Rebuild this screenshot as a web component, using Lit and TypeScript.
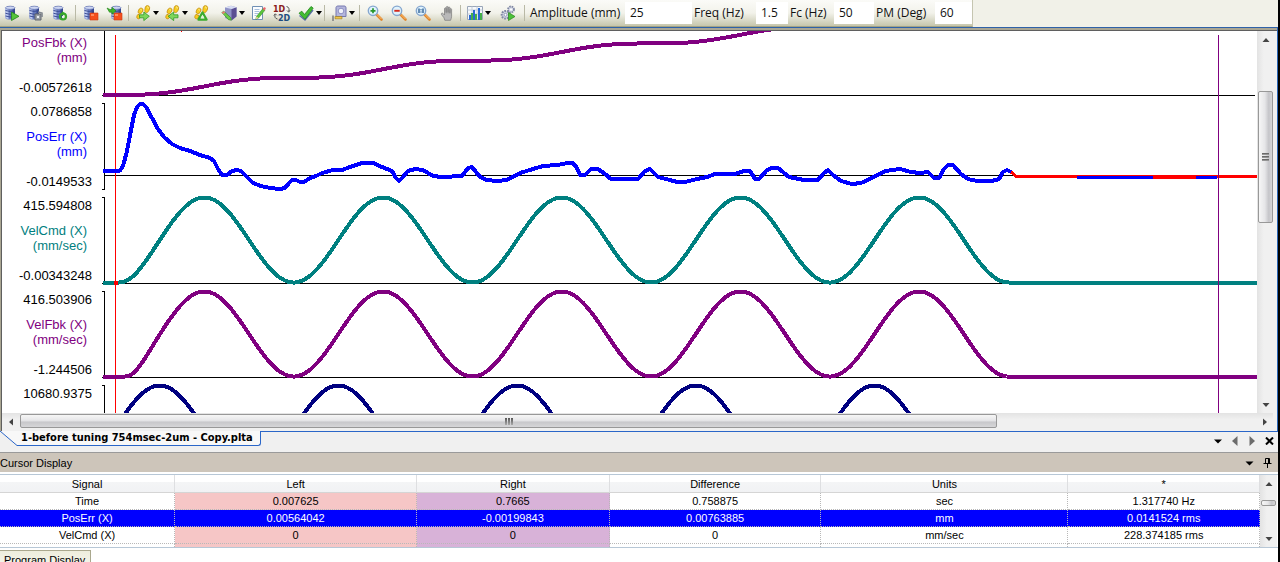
import { LitElement, html, svg, css, nothing, type TemplateResult } from "lit";
import { customElement } from "lit/decorators.js";
import { classMap } from "lit/directives/class-map.js";

/* ---------- icon parts, all on a 16 x 16 grid ---------- */

const drum = svg`
  <path d="M1.5 3v10c0 2 9.500 2 9.500 0V3z" fill="#6478bd"/>
  <path d="M1.500 3h3v11c-2-.2-3-.6-3-1z" fill="#b9c6ee"/>
  <path d="M8.500 3h2.500v10c0 .5-1 .9-2.500 1z" fill="#33458c"/>
  <path d="M1.500 5.500q4.700 2 9.500 0M1.500 8.300q4.700 2 9.500 0M1.500 11q4.700 2 9.500 0" fill="none" stroke="#3d4e96"/>
  <ellipse cx="6.250" cy="2.800" rx="4.800" ry="1.600" fill="#cdd6f2" stroke="#5a6cae" stroke-width=".7"/>`;

const stop = svg`<path d="M7 8h8v7H7z" fill="#f4501e" stroke="#c93a10" stroke-width=".6"/><path d="M8 9h3v2H8z" fill="#ff8a5c"/>`;

const steps = svg`
  <g fill="#f7cd20" stroke="#c08a08" stroke-width=".8">
    <path d="M11.500.8c2.300-.6 3.600 1 3 3.200-.5 1.800-1.500 3.600-3 3.600s-1.900-1.400-1.600-3.200c.2-1.600.5-3.200 1.600-3.600z"/>
    <path d="M5.500 3.200c2.200-.4 3 1.200 2.200 3C6.800 8.300 5.500 9 4.200 8.600 2.800 8 3 6.500 3.600 5.200c.4-1 1-1.800 1.900-2z"/>
    <path d="M3 9.300l3 1.300c-.3 1.900-1.200 3.400-2.700 3.200C1.200 13.500 1.500 11 3 9.300z"/>
  </g>
  <path d="M12 2c1-.2 1.500.5 1.300 1.500M5.600 4.500c.7-.2 1 .3.800.9" stroke="#fff3a8" fill="none"/>`;

const lens = svg`
  <path d="M9.500 9.500l5 5" stroke="#e0872c" stroke-width="2.600" stroke-linecap="round"/>
  <path d="M9.800 9.300l4.700 4.700" stroke="#ffc37a" stroke-width=".9"/>
  <circle cx="6" cy="5.800" r="4.700" fill="#dff3fd" stroke="#85a6cf" stroke-width="1.400"/>`;

const pencil = svg`
  <path d="M6.500 11.500L13 3.500l2 1.600-6.500 8-2.700 1.200z" fill="#5ac63c" stroke="#2f8a1e" stroke-width=".6"/>
  <path d="M12.500 4l1.200-1.500c1-.8 2.600.4 1.900 1.500L14.500 5.600z" fill="#e8686c"/>
  <path d="M6.500 11.500l2 1.600-2.700 1.200z" fill="#f6d9a0"/>`;

const ICONS: Record<string, TemplateResult> = {
  run: svg`${drum}<path d="M7.500 7l7.500 4.300L7.500 15.500z" fill="#56c43a" stroke="#258a18" stroke-width=".8"/>`,
  halt: svg`${drum}<path d="M7 9h6v6H7z" fill="#9aa0a8" stroke="#62676e"/><path d="M10 7l4 1v4" stroke="#80868e" fill="none" stroke-width="1.600"/><path d="M9 11h2v2H9z" fill="#eceff2"/>`,
  cycle: svg`${drum}<circle cx="11" cy="11.500" r="3" fill="none" stroke="#37a62a" stroke-width="2.200"/><path d="M10 6.300l3.600 2.200-3.600 2.200z" fill="#37a62a"/><path d="M10 11h2v2h-2z" fill="#e7f7e2"/>`,
  stop: svg`${drum}${stop}`,
  swap: svg`<g transform="translate(3 0)">${drum}</g>${stop}<path d="M0 3l3 1.500h2V2.300L9 5.800 5 9.300V7.200H2.500z" fill="#3fb62c" stroke="#1d8212" stroke-width=".6"/>`,
  stepNext: svg`${steps}<path d="M4.500 9.800h4.300V7l5.500 4.300-5.500 4.300v-2.800H4.500z" fill="#7fd75c" stroke="#2f9a24" stroke-width=".8"/>`,
  stepBack: svg`${steps}<path d="M14 9.800H9.700V7l-5.500 4.300 5.500 4.300v-2.800H14z" fill="#7fd75c" stroke="#2f9a24" stroke-width=".8"/>`,
  stepLoop: svg`${steps}<path d="M9.500 7.500l4 7H5.500z" fill="none" stroke="#3aab2c" stroke-width="2.400" stroke-linejoin="round"/><path d="M9.500 9.500l2 4h-4z" fill="#dff5d6"/>`,
  edit: svg`
    <path d="M4 2.500L10 .8 15.500 2.200v9.300l-5 4L4 13z" fill="#8f93c6"/>
    <path d="M10.500 4v11.500l5-4V2.200z" fill="#5b4f92"/>
    <path d="M4 2.500L10 .8l5.500 1.400-5 1.800z" fill="#d7dcf3"/>
    <path d="M.8 7.500l2-1.300 7 6.500.5 2.500-2.800-.5z" fill="#6bcb48" stroke="#2f8a1e" stroke-width=".6"/>
    <path d="M.8 7.500l2-1.300 1.400 1.300-2 1.500z" fill="#f07a7a"/>`,
  note: svg`
    <path d="M2.500 1.500h10v13h-10z" fill="#fbfdff" stroke="#7090b4"/>
    <path d="M4.500 4.500h5M4.500 6.500h5M4.500 8.500h4M4.500 10.500h2" stroke="#a9c0dc"/>${pencil}`,
  dims: svg`
    <g font-family="DejaVu Sans, sans-serif" font-size="8" font-weight="700">
      <text x="-1" y="6.500" fill="#8a1a1a">1D</text><text x="4" y="15.500" fill="#1d4c7e">2D</text>
    </g>
    <path d="M12.500 1.500c2.500.5 3 2.500 2.200 5M13 5.500l1.700 1.700 1.300-2M3.500 14c-2.600-.5-3.200-2.500-2.300-4.700M-.2 10.500l1.500-1.700 1.500 1.500" fill="none" stroke="#555"/>`,
  check: svg`<path d="M1.500 10.500L7 15l8-10" stroke="#5b6fa8" fill="none" stroke-width="1.500"/><path d="M1 8.200l2.800-2 2.700 3.300L13 1.500l2.200 1.600L7 14.300z" fill="#42bd32" stroke="#1f8519" stroke-width=".8"/>`,
  tape: svg`
    <path d="M5 2.500c0-1 1-1.500 2-1.500h6c1.500 0 2 .6 2 2v8.500H5z" fill="#b4b6dc" stroke="#7678b0"/>
    <circle cx="10" cy="6" r="2.800" fill="#f1f2fb" stroke="#8d8fc2"/>
    <path d="M4 11.500h7v2.300H4z" fill="#f1c64a" stroke="#9b7a1c" stroke-width=".6"/>
    <path d="M2 10.500v5.500" stroke="#7d7d7d" stroke-width="1.500"/>`,
  zoomIn: svg`${lens}<path d="M6 3.300v5M3.500 5.800h5" stroke="#27962a" stroke-width="1.700"/>`,
  zoomOut: svg`${lens}<path d="M3.300 5.800h5.400" stroke="#d42a1c" stroke-width="1.900"/>`,
  zoomOne: svg`${lens}<path d="M4 3.500v4.600M8 3.500v4.600" stroke="#22558e" stroke-width="1.300"/><path d="M6 4.300v1M6 6.500v1" stroke="#22558e" stroke-width="1.200"/>`,
  hand: svg`<path d="M4.800 15L4 12.500 1.500 9.300c-.8-1.200.8-2 1.700-1l1.300 1.400V3.500c0-1.300 1.700-1.300 1.700 0v3.700-5c0-1.400 1.900-1.400 1.900 0v4.900-4.500c0-1.300 1.800-1.300 1.800 0v5-3.400c0-1.200 1.700-1.200 1.700 0v6.800c0 1.600-.6 2.300-1 4z" transform="translate(1 .3)" fill="#b9b9b9" stroke="#828282" stroke-width=".8"/><path d="M7.200 4v4.500M9.100 4v4.500M11 5v4" stroke="#8e8e8e" stroke-width=".6"/>`,
  chart: svg`
    <path d="M.5 1.500h15v13H.5z" fill="#f5f8fc" stroke="#9aa6b8"/>
    <path d="M.5 5h15M.5 9h15M5 1.500v13M10 1.500v13" stroke="#c3ccd8"/>
    <path d="M2 15V10h2v5zM6 15V5h2v10zM11 15V3h2v12z" fill="#2a69d4"/>
    <path d="M4 15V8h2v7zM8 15V9h2v6zM13 15V8h2v7z" fill="#44b048"/>`,
  gears: svg`
    <circle cx="11" cy="4.500" r="3" fill="#d7dbe8" stroke="#8088a4" stroke-width="1.800" stroke-dasharray="1.600 .8"/>
    <circle cx="5.500" cy="9.800" r="3.800" fill="#d7dbe8" stroke="#8088a4" stroke-width="2" stroke-dasharray="1.800 .9"/>
    <circle cx="5.500" cy="9.800" r="1.500" fill="#fff" stroke="#7078a0" stroke-width=".7"/>
    <circle cx="11" cy="4.500" r="1" fill="#fff"/>
    <path d="M8.500 7.500l6.500 4-6.500 4z" fill="#4cc13a" stroke="#258a18" stroke-width=".7"/>`,
};

interface Tool { icon: string; name: string; menu?: boolean }
interface ToolGroup { rule?: boolean; tools: Tool[] }

const GROUPS: ToolGroup[] = [
  { tools: [{ icon: "run", name: "Run" }, { icon: "halt", name: "Pause" }, { icon: "cycle", name: "Repeat" }] },
  { rule: true, tools: [{ icon: "stop", name: "Stop" }, { icon: "swap", name: "Transfer and stop" }] },
  { tools: [{ icon: "stepNext", name: "Step forward", menu: true }, { icon: "stepBack", name: "Step back", menu: true }, { icon: "stepLoop", name: "Step loop" }] },
  { tools: [{ icon: "edit", name: "Edit data", menu: true }, { icon: "note", name: "Notes" }, { icon: "dims", name: "Dimensions" }, { icon: "check", name: "Verify", menu: true }] },
  { tools: [{ icon: "tape", name: "Measure", menu: true }] },
  { rule: true, tools: [{ icon: "zoomIn", name: "Zoom in" }, { icon: "zoomOut", name: "Zoom out" }, { icon: "zoomOne", name: "Zoom 1:1" }, { icon: "hand", name: "Pan" }] },
  { tools: [{ icon: "chart", name: "Spectrum", menu: true }] },
  { tools: [{ icon: "gears", name: "Autotune" }] },
];

/* groups that open with a thin divider but keep the tight spacing */
const TIGHT_RULES = new Set([2, 4, 6]);

const FIELDS = [
  { id: "amp", label: "Amplitude (mm)", value: "25" },
  { id: "freq", label: "Freq (Hz)", value: "1.5" },
  { id: "fc", label: "Fc (Hz)", value: "50" },
  { id: "pm", label: "PM (Deg)", value: "60" },
];

@customElement("tool-strip")
class ToolStrip extends LitElement {
  static styles = css`
    :host { display: block; background: #f1f1e8; border-bottom: 1px solid #2f62a8; }
    .bar {
      display: flex; align-items: center; gap: 4px; width: max-content; height: 27px; box-sizing: border-box;
      border-right: 1px solid #c5c5b0; border-bottom: 1px solid #a3a385;
      background: linear-gradient(#fbfbf8, #f2f2ea 50%, #c6c6ac);
    }
    .group { display: flex; height: 26px; align-items: center; }
    .rule { margin-left: 3px; }
    .line { width: 1px; height: 16px; background: #b9b9a6; }
    .group .line { margin: 0 2px 0 -3px; }
    .rule .line { margin: 0 3px 0 -4px; }
    button {
      display: flex; align-items: center; height: 24px; width: 24px; padding: 0 4px; border: 0;
      background: none; color: #000;
    }
    button.menu { width: 29px; padding: 0 0 0 4px; }
    svg { display: block; flex: none; overflow: visible; }
    .params {
      display: grid; grid-template-columns: 96px 67px 64px 32px 46px 40px 61px 37px; align-items: center; height: 26px;
      font: 12px/22px "Open Sans", sans-serif; color: #111;
    }
    label { white-space: nowrap; padding-left: 2px; }
    label:first-child { padding-left: 1px; }
    input {
      box-sizing: border-box; width: 100%; height: 22px; border: 0; padding: 0 5px; background: #fff; color: #111;
      font: 12px/22px "Open Sans", sans-serif; border-radius: 0;
    }
  `;

  render() {
    return html`<div class="bar" role="toolbar">
      ${GROUPS.map((g, n) => html`<div class=${classMap({ group: true, rule: !!g.rule })}>
        ${g.rule || TIGHT_RULES.has(n) ? html`<span class="line"></span>` : nothing}
        ${g.tools.map((t) => html`<button class=${classMap({ menu: !!t.menu })} aria-label=${t.name}>
          <svg width="16" height="16" viewBox="0 0 16 16">${ICONS[t.icon]}</svg>
          ${t.menu ? html`<svg width="9" height="6" viewBox="0 0 9 6"><path d="M2 1h6L5 5z" fill="#000"/></svg>` : nothing}
        </button>`)}
      </div>`)}
      <span class="line"></span>
      <div class="params">
        ${FIELDS.map((f) => html`<label for=${f.id}>${f.label}</label><input id=${f.id} .value=${f.value}>`)}
      </div>
    </div>`;
  }
}

/* ---------- scroll bar, shared by the plot and the table ---------- */

@customElement("scroll-track")
class ScrollTrack extends LitElement {
  static properties = {
    axis: { type: String, reflect: true },
    before: { type: Number },
    thumb: { type: Number },
    grip: { type: Boolean },
  };
  declare axis: string;
  declare before: number;
  declare thumb: number;
  declare grip: boolean;

  static styles = css`
    :host { display: flex; background: #eee; flex: none; }
    :host([axis="y"]) { flex-direction: column; width: 17px; background: linear-gradient(90deg, #e3e3e3, #f0f0f0 40%); }
    :host([axis="x"]) { height: 16px; background: linear-gradient(#e3e3e3, #f0f0f0 40%); }
    button { border: 0; padding: 0; width: 17px; height: 17px; background: none; display: grid; place-items: center; flex: none; }
    .slot { flex: 1; display: flex; min-width: 0; min-height: 0; }
    :host([axis="y"]) .slot { flex-direction: column; }
    .thumb {
      flex: none; display: flex; align-items: center; justify-content: center; box-sizing: border-box;
      border: 1px solid #989898; border-radius: 2px;
    }
    :host([axis="y"]) .thumb { margin: 0 1px; flex-direction: column; background: linear-gradient(90deg, #f6f6f6, #e6e6e8 45%, #c5c5c9 75%, #d6d6d8); }
    :host([axis="x"]) .thumb { margin: 1px 0; background: linear-gradient(#f6f6f6, #e6e6e8 45%, #c8c8cb 60%, #d6d6d8); }
    .grip { display: grid; gap: 1px; }
    :host([axis="x"]) .grip { grid-auto-flow: column; }
    .grip i { display: block; width: 7px; height: 2px; background: linear-gradient(#555, #aaa); }
    :host([axis="x"]) .grip i { width: 2px; height: 7px; }
  `;

  render() {
    const y = this.axis === "y";
    const size = `${y ? "height" : "width"}:${this.thumb}%`;
    const lead = `flex:0 0 ${this.before}%`;
    return html`
      <button aria-label=${y ? "Scroll up" : "Scroll left"}>
        <svg width="8" height="8" viewBox="0 0 8 8"><path d=${y ? "M0.500 6L4 2l3.500 4z" : "M6 0.500L2 4l4 3.500z"} fill="#444"/></svg>
      </button>
      <div class="slot">
        <div style=${lead}></div>
        <div class="thumb" style=${size}>${this.grip ? html`<span class="grip"><i></i><i></i><i></i></span>` : nothing}</div>
      </div>
      <button aria-label=${y ? "Scroll down" : "Scroll right"}>
        <svg width="8" height="8" viewBox="0 0 8 8"><path d=${y ? "M0.500 2L4 6l3.500-4z" : "M2 0.500L6 4 2 7.500z"} fill="#444"/></svg>
      </button>`;
  }
}

/* ---------- signal plot ---------- */

type Point = [number, number];

const START = 115;
const PERIOD = 178.7;
const END = START + 5 * PERIOD;
const LAST = 1257;

const line = (points: Point[]) => "M" + points.map(([x, y]) => `${x.toFixed(1)} ${y.toFixed(1)}`).join("L");

function sample(from: number, to: number, f: (x: number) => number): Point[] {
  const out: Point[] = [];
  for (let x = from; x <= to; x += 2) out.push([x, f(x)]);
  return out;
}

/* a raised cosine; the first rise sets off late by `lag`, which fades out along the slope */
function velocity(base: number, lag: number, tail: number) {
  const f = (x: number) => {
    const late = lag * Math.exp(-(((x - START) / 24) ** 2));
    const u = Math.max(0, x - START - late) / PERIOD;
    return base - 42.5 * (1 - Math.cos(2 * Math.PI * u));
  };
  return line([[103, base], ...sample(START, END - tail, f), [END - tail, base], [LAST, base]]);
}

const position = line([
  [103, 95],
  ...sample(START, 900, (x) => {
    const u = (x - START) / PERIOD;
    return 95 - 17.2 * (u - Math.sin(2 * Math.PI * u) / (2 * Math.PI));
  }),
]);

const acceleration = line(sample(START, END, (x) => 429 - 43.5 * Math.sin((2 * Math.PI * (x - START)) / PERIOD)));

const ERROR: Point[] = [
  [103, 170.5], [120, 170.5], [123, 166], [127, 151], [131, 130], [134, 115], [137, 107], [140, 104], [143, 104], [146, 107],
  [152, 118], [158, 129], [164, 137], [172, 144], [180, 148], [190, 151], [200, 155], [210, 158], [214, 161], [218, 169],
  [222, 175], [227, 175], [232, 171], [237, 170], [241, 171], [247, 177], [253, 183], [261, 186], [270, 188], [280, 189],
  [285, 188], [289, 183], [292, 180], [296, 180], [300, 182], [304, 182], [310, 178], [316, 176], [322, 173], [333, 170],
  [342, 170], [353, 166], [362, 163], [373, 163], [382, 167], [392, 171], [396, 178], [399, 181], [403, 177], [408, 171],
  [415, 169], [423, 170], [433, 176], [442, 177], [462, 176], [468, 168], [472, 167], [480, 177], [487, 180], [497, 181],
  [507, 180], [520, 173], [533, 169], [543, 166], [558, 165], [567, 163], [573, 163], [577, 168], [580, 175], [585, 175],
  [591, 169], [598, 169], [605, 174], [611, 179], [638, 179], [645, 171], [650, 169], [658, 177], [670, 180], [677, 182],
  [685, 182], [697, 179], [707, 177], [715, 174], [735, 174], [744, 171], [750, 171], [755, 179], [759, 179], [767, 170],
  [772, 168], [778, 168], [789, 177], [804, 180], [818, 180], [824, 173], [828, 170], [833, 175], [841, 181], [852, 184],
  [861, 183], [874, 177], [885, 171], [900, 169], [911, 172], [920, 173], [928, 172], [934, 178], [939, 178], [944, 169],
  [948, 165], [953, 165], [961, 174], [968, 179], [977, 181], [992, 181], [999, 179], [1003, 172], [1007, 170], [1011, 172],
];

const SIGNALS = [
  { name: "PosFbk (X)", unit: "(mm)", top: "", bottom: "-0.00572618", tone: "purple" },
  { name: "PosErr (X)", unit: "(mm)", top: "0.0786858", bottom: "-0.0149533", tone: "blue" },
  { name: "VelCmd (X)", unit: "(mm/sec)", top: "415.594808", bottom: "-0.00343248", tone: "teal" },
  { name: "VelFbk (X)", unit: "(mm/sec)", top: "416.503906", bottom: "-1.244506", tone: "purple" },
  { name: "", unit: "", top: "10680.9375", bottom: "", tone: "navy" },
];

@customElement("signal-plot")
class SignalPlot extends LitElement {
  static styles = css`
    :host { display: block; border: solid #aaa693; border-width: 2px 0 0 1px; background: #fff; }
    .frame { border: solid #5f5f5f; border-width: 1px 0 0 1px; }
    .body { display: grid; grid-template-columns: 100px minmax(0, 1fr) 17px; padding-right: 3px; background: #f0f0f0; }
    .names { background: #fff; display: flex; flex-direction: column; height: 382px; overflow: hidden; }
    .signal {
      flex: none; box-sizing: border-box; height: 94px; padding: 3px 10px 6px 0; text-align: right;
      display: flex; flex-direction: column; justify-content: space-between;
      font: 13px/15px "Liberation Sans", sans-serif; white-space: nowrap; color: #000;
    }
    .signal p { margin: 0; min-height: 15px; }
    .signal:first-child { height: 70px; padding-top: 4px; }
    .signal:first-child .value:first-child { display: none; }
    .title { padding: 0 5px 5px 0; }
    .purple .title { color: #800080; }
    .blue .title { color: #00f; }
    .teal .title { color: #008080; }
    .navy .title { color: #000080; }
    .area { display: block; width: 100%; height: 382px; background: #fff; }
    .area path { fill: none; vector-effect: non-scaling-stroke; shape-rendering: crispEdges; }
    .trace { stroke-width: 4px; stroke-linejoin: round; }
    .thin { stroke-width: 3px; }
    .axis { stroke: #000; stroke-width: 1px; }
    .cursor { stroke-width: 1px; }
    .foot { display: flex; padding: 0 4px 2px 0; background: #f0f0f0; }
    .foot scroll-track { flex: 1; }
  `;

  render() {
    return html`<div class="frame">
      <div class="body">
        <div class="names">
          ${SIGNALS.map((s) => html`<div class="signal ${s.tone}">
            <p class="value">${s.top}</p>
            <div class="title"><p>${s.name}</p><p>${s.unit}</p></div>
            <p class="value">${s.bottom}</p>
          </div>`)}
        </div>
        <svg class="area" viewBox="102 31 1155 382" preserveAspectRatio="none">
          <path class="axis" d="M104.500 31V95M101 95.500H1255M101 103.500h3.500V189.500H101M104 175.500H1250M101 197.500h3.500V283.500M101 283.500H1257M101 291.500h3.500V377.500M101 377.500H1257M101 385.500h3.500V413"/>
          <path class="cursor" stroke="#f00" d="M115.500 35V413M181.500 31v1"/>
          <path class="trace" stroke="#800080" d=${position}/>
          <path class="trace" stroke="#0000ff" d=${line(ERROR)}/>
          <path class="thin" stroke="#ff0000" d="M1011 172L1016 176.500H1257M1153 177.500H1196"/>
          <path class="thin" stroke="#0000ff" d="M1077 177.500H1153M1196 177.500H1217"/>
          <path class="trace" stroke="#008080" d=${velocity(282.5, 4, 0)}/>
          <path class="trace" stroke="#800080" d=${velocity(376.5, 12, 2)}/>
          <path class="trace" stroke="#000080" d=${acceleration}/>
          <path class="trace" stroke="#f00" d="M114 283h4"/>
          <path class="cursor" stroke="#800080" d="M1218.500 35V413"/>
        </svg>
        <scroll-track axis="y" .before=${12.4} .thumb=${38} grip></scroll-track>
      </div>
      <div class="foot"><scroll-track axis="x" .before=${0.1} .thumb=${79} grip></scroll-track></div>
    </div>`;
  }
}

/* ---------- cursor table ---------- */

const HEADS = ["Signal", "Left", "Right", "Difference", "Units", "*"];
const ROWS = [
  ["Time", "0.007625", "0.7665", "0.758875", "sec", "1.317740 Hz"],
  ["PosErr (X)", "0.00564042", "-0.00199843", "0.00763885", "mm", "0.0141524 rms"],
  ["VelCmd (X)", "0", "0", "0", "mm/sec", "228.374185 rms"],
];

@customElement("cursor-panel")
class CursorPanel extends LitElement {
  static styles = css`
    :host { display: block; background: #fff; font: 11px/16px "Liberation Sans", sans-serif; color: #000; }
    header {
      display: flex; align-items: center; height: 20px; box-sizing: border-box; background: #cdc5ba;
      border-top: 1px solid #9a9a9a; padding: 0 2px 0 0;
    }
    h2 { margin: 0; font: inherit; flex: 1; }
    header button { border: 0; background: none; padding: 0; width: 18px; height: 16px; display: grid; place-items: center; }
    .grid { display: flex; margin-top: 2px; border: solid #b7c7d6; border-width: 1px 0; padding-right: 1px; }
    table { flex: 1; table-layout: fixed; border-collapse: separate; border-spacing: 0; }
    th {
      font-weight: 400; height: 18px; padding: 1px 0 0; box-sizing: border-box;
      border-right: 1px solid #dedfe1; border-bottom: 1px solid #d5d5d5;
      background: linear-gradient(#fff 40%, #f4f5f6 40%, #f1f2f4);
    }
    td { height: 16px; padding: 0; text-align: center; border-right: 1px dotted #b8b8b8; border-bottom: 1px dotted #b8b8b8; }
    .left { background: #f6c6c6; }
    .right { background: #d8b2d8; }
    .chosen td { background: #00f; color: #fff; }
    .rest td { height: 3px; line-height: 0; border-bottom: 0; }
    .c0 { width: 13.900%; } .c1 { width: 19.200%; } .c2 { width: 15.300%; }
    .c3 { width: 16.800%; } .c4 { width: 19.600%; } .c5 { width: 15.200%; }
  `;

  private tint = (i: number) => (i === 1 ? "left" : i === 2 ? "right" : "");

  render() {
    return html`
      <header>
        <h2>Cursor Display</h2>
        <button aria-label="Panel menu"><svg width="9" height="6" viewBox="0 0 9 6"><path d="M0.500 1.500h8L4.500 5.500z"/></svg></button>
        <button aria-label="Pin panel"><svg width="9" height="10" viewBox="0 0 9 10"><path d="M2.500 5.500V.5h4v5M5.500.5v5M0.500 5.500h8M4.500 5.500V10" fill="none" stroke="#000"/></svg></button>
      </header>
      <div class="grid">
        <table>
          <thead><tr>${HEADS.map((h, i) => html`<th class="c${i}" scope="col">${h}</th>`)}</tr></thead>
          <tbody>
            ${ROWS.map((r, n) => html`<tr class=${n === 1 ? "chosen" : ""}>${r.map((v, i) => html`<td class=${this.tint(i)}>${v}</td>`)}</tr>`)}
            <tr class="rest">${HEADS.map((_, i) => html`<td class=${this.tint(i)}></td>`)}</tr>
          </tbody>
        </table>
        <scroll-track axis="y" .before=${22} .thumb=${16}></scroll-track>
      </div>`;
  }
}

@customElement("app-root")
class AppRoot extends LitElement {
  static styles = css`
    :host { display: block; box-sizing: border-box; border-right: 2px solid #000; background: #fff; height: 100vh; overflow: hidden; }
    .doc { border-right: 1px solid #2a66b8; }
    .tabs { display: flex; align-items: flex-start; height: 21px; background: #f0f0f0; }
    .tab {
      display: flex; height: 15px; padding: 0; border: 0; background: none;
      font: 700 11px/14px "DejaVu Sans Condensed", "DejaVu Sans", sans-serif; font-stretch: condensed; color: #000; white-space: nowrap;
    }
    .tab svg { display: block; flex: none; }
    .caption {
      height: 15px; box-sizing: border-box; padding: 0 7px 0 3px; background: #f8f8f8;
      border: solid #2a66c8; border-width: 0 1px 1px 0; border-bottom-right-radius: 3px;
    }
    .rail { flex: 1; height: 18px; border-top: 1px solid #2a66c8; display: flex; justify-content: flex-end; gap: 1px; padding-right: 1px; }
    .rail button { border: 0; padding: 0; background: none; width: 16px; height: 18px; display: grid; place-items: center; }
    .bottom { display: flex; padding-top: 2px; }
    .bottom button {
      border: 1px solid #aaa88e; border-left: 0; background: linear-gradient(#eeeedd, #f7f7ee); padding: 2px 5px 2px 4px;
      font: 11px/14px "Liberation Sans", sans-serif; color: #000;
    }
  `;

  render() {
    return html`
      <tool-strip></tool-strip>
      <div class="doc"><signal-plot></signal-plot></div>
      <div class="tabs">
        <button class="tab">
          <svg width="18" height="15" viewBox="0 0 18 15"><path d="M0 0L17 14.500h1V0z" fill="#f8f8f8"/><path d="M0 0L17 14.500h1" fill="none" stroke="#2a66c8"/></svg>
          <span class="caption">1-before tuning 754msec-2um - Copy.plta</span>
        </button>
        <div class="rail">
          <button aria-label="Open documents"><svg width="8" height="5" viewBox="0 0 8 5"><path d="M0 .5h8L4 4.500z"/></svg></button>
          <button aria-label="Previous tab"><svg width="6" height="10" viewBox="0 0 6 10"><path d="M5.500 0v10L0 5z" fill="#6c6c6c"/></svg></button>
          <button aria-label="Next tab"><svg width="6" height="10" viewBox="0 0 6 10"><path d="M0.500 0v10L6 5z" fill="#6c6c6c"/></svg></button>
          <button aria-label="Close tab"><svg width="9" height="8" viewBox="0 0 9 8"><path d="M1 .5l7 7M8 .5l-7 7" stroke="#000" stroke-width="2"/></svg></button>
        </div>
      </div>
      <cursor-panel></cursor-panel>
      <div class="bottom"><button>Program Display</button></div>`;
  }
}
